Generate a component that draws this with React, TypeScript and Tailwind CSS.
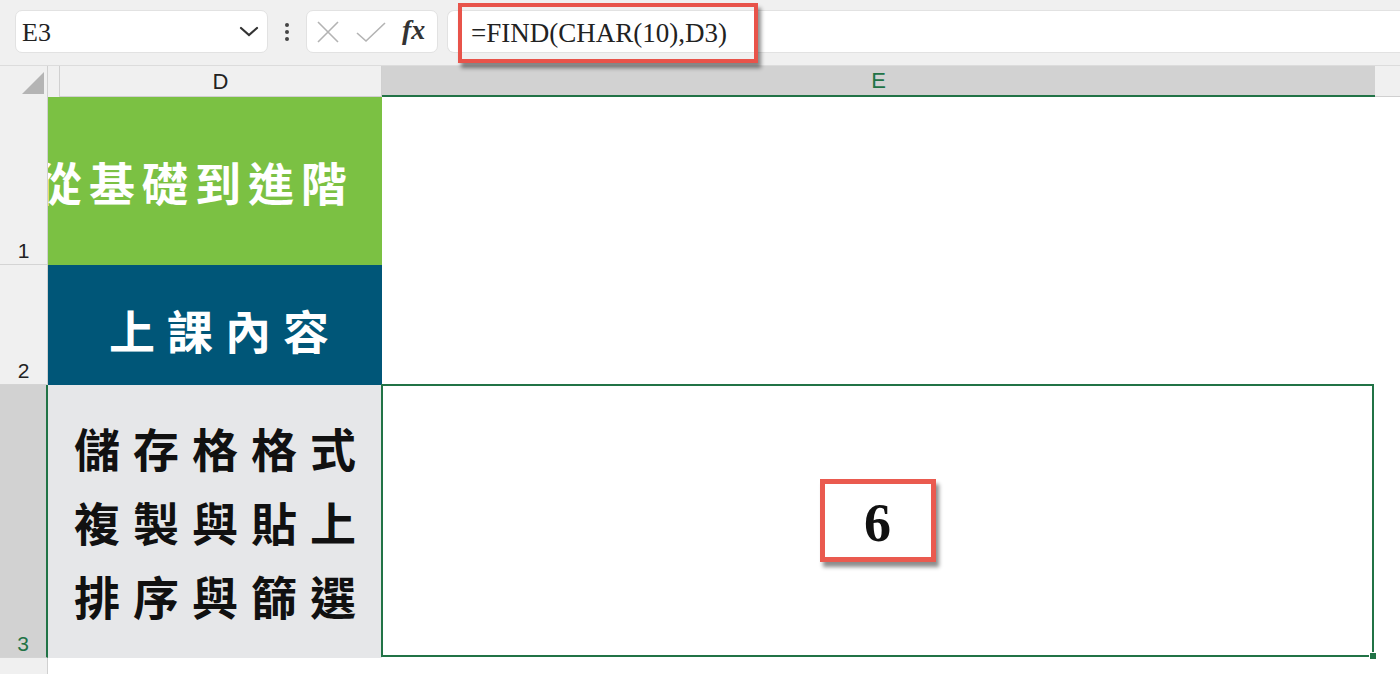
import React from 'react';

// Excel-style sheet: formula bar on top, columns D and E, rows 1-3
const cjk = { fontFamily: '"Noto Sans CJK TC", "Noto Sans CJK SC", sans-serif' };
const serif = { fontFamily: '"Liberation Serif", "Times New Roman", serif' };
const sans = { fontFamily: '"Liberation Sans", Arial, sans-serif' };

function RowHead({ n, h, selected }: { n: string; h: string; selected?: boolean }) {
  return (
    <div
      className={`${h} w-[48px] shrink-0 flex items-end justify-center pb-[3px] text-[21px] leading-none border-b border-[#d4d4d4] ${
        selected ? 'bg-[#d2d2d2] text-[#217346] border-r-2 border-r-[#217346]' : 'bg-[#f0f0f0] text-[#222] border-r border-r-[#d0d0d0]'
      }`}
      style={sans}
    >
      {n}
    </div>
  );
}

export default function App() {
  return (
    <div className="w-[1400px] h-[674px] overflow-hidden bg-white relative">
      {/* formula bar */}
      <div className="h-[65px] bg-[#f0f0f0] flex items-start pt-[10px]">
        <div className="ml-[15px] w-[253px] h-[43px] bg-white rounded-[7px] border border-[#e2e2e2] flex items-center pl-[6px] pr-[6px]">
          <span className="text-[26px] leading-none text-[#222] pt-[3px]" style={serif}>E3</span>
          <svg className="ml-auto mr-[2px]" width="20" height="11" viewBox="0 0 20 11">
            <path d="M2 2 L10 9 L18 2" fill="none" stroke="#333" strokeWidth="2.2" strokeLinecap="round" />
          </svg>
        </div>
        <div className="w-[38px] h-[43px] flex flex-col items-center justify-center gap-[3px]">
          <span className="w-[4px] h-[4px] rounded-full bg-[#444]" />
          <span className="w-[4px] h-[4px] rounded-full bg-[#444]" />
          <span className="w-[4px] h-[4px] rounded-full bg-[#444]" />
        </div>
        <div className="w-[132px] h-[43px] bg-white rounded-[7px] border border-[#e2e2e2] flex items-center pl-[9px] gap-[16px]">
          <svg width="24" height="22" viewBox="0 0 24 22">
            <path d="M2 1 L22 21 M22 1 L2 21" stroke="#b3b3b3" strokeWidth="1.6" />
          </svg>
          <svg width="30" height="22" viewBox="0 0 30 22">
            <path d="M1 12 L10 20 L29 2" fill="none" stroke="#b3b3b3" strokeWidth="1.6" />
          </svg>
          <span className="text-[28px] leading-none italic font-bold text-[#333] -mt-[4px]" style={serif}>fx</span>
        </div>
        <div className="ml-[9px] flex-1 h-[43px] bg-white rounded-l-[7px] border border-r-0 border-[#e2e2e2] relative">
          <div className="pl-[23px] pt-[9px] text-[27px] leading-none text-[#222]" style={serif}>
            =FIND(CHAR(10),D3)
          </div>
          <div className="absolute left-[10px] -top-[8px] w-[300px] h-[60px] border-[4px] border-[#e8534a] shadow-[3px_5px_4px_rgba(0,0,0,0.45)]" />
        </div>
      </div>

      {/* column headers */}
      <div className="h-[32px] flex bg-[#f0f0f0] border-t border-[#dcdcdc]" style={sans}>
        <div className="w-[48px] shrink-0 border-r border-[#d0d0d0] flex items-end justify-end pr-[3px] pb-[3px]">
          <svg width="22" height="22" viewBox="0 0 22 22">
            <path d="M22 0 L22 22 L0 22 Z" fill="#b4b4b4" />
          </svg>
        </div>
        <div className="w-[12px] shrink-0 border-r border-[#d0d0d0]" />
        <div className="w-[322px] shrink-0 flex items-center justify-center text-[22px] text-[#222] border-r border-[#d0d0d0] border-b border-b-[#d0d0d0]">
          D
        </div>
        <div className="w-[993px] shrink-0 flex items-center justify-center text-[22px] text-[#217346] bg-[#d2d2d2] border-b-2 border-[#217346]">
          E
        </div>
        <div className="flex-1 border-b border-[#d0d0d0]" />
      </div>

      {/* row 1 */}
      <div className="flex">
        <RowHead n="1" h="h-[168px]" />
        <div className="w-[334px] h-[168px] shrink-0 bg-[#7bc143] overflow-hidden flex items-center justify-end pr-[28px]">
          <span className="whitespace-nowrap text-white font-bold text-[46px] leading-none tracking-[7px]" style={cjk}>
            從基礎到進階
          </span>
        </div>
        <div className="w-[993px] h-[168px] shrink-0" />
      </div>

      {/* row 2 */}
      <div className="flex">
        <RowHead n="2" h="h-[120px]" />
        <div className="w-[334px] h-[120px] shrink-0 bg-[#005678] flex items-center pl-[61px] pt-[8px]">
          <span className="whitespace-nowrap text-white font-bold text-[46px] leading-none tracking-[12px]" style={cjk}>
            上課內容
          </span>
        </div>
        <div className="w-[993px] h-[120px] shrink-0" />
      </div>

      {/* row 3 */}
      <div className="flex">
        <RowHead n="3" h="h-[273px]" selected />
        <div className="w-[334px] h-[273px] shrink-0 bg-[#e6e7e9] flex flex-col justify-center pl-[26px] pb-[2px]">
          {['儲存格格式', '複製與貼上', '排序與篩選'].map((line) => (
            <div key={line} className="whitespace-nowrap text-[#111] font-bold text-[46px] leading-[74px] tracking-[13px]" style={cjk}>
              {line}
            </div>
          ))}
        </div>
        <div className="w-[993px] h-[273px] shrink-0 border-2 border-[#217346] -ml-[1px] -mt-[1px] relative flex items-center justify-center">
          <div className="w-[116px] h-[83px] border-[5px] border-[#ea5a4f] bg-white shadow-[3px_5px_4px_rgba(0,0,0,0.45)] flex items-center justify-center pt-[4px]">
            <span className="text-[54px] leading-none font-bold text-[#111]" style={serif}>6</span>
          </div>
          <div className="absolute -right-[5px] -bottom-[5px] w-[8px] h-[8px] bg-[#217346] border border-white" />
        </div>
      </div>

      {/* row 4 (partial) */}
      <div className="flex">
        <div className="w-[48px] h-[20px] shrink-0 bg-[#f0f0f0] border-r border-[#d0d0d0]" />
      </div>
    </div>
  );
}
